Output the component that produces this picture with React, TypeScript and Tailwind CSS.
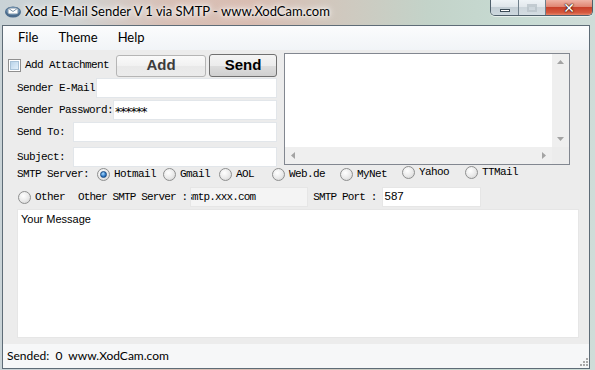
import React from "react";

const mono =
  "font-['Liberation_Mono','DejaVu_Sans_Mono',monospace] text-[11px] tracking-[-0.6px] text-black whitespace-nowrap leading-none";

function Radio({ checked }: { checked?: boolean }) {
  return (
    <span className="w-[13px] h-[13px] rounded-full border border-[#8e8f8f] bg-[radial-gradient(circle_at_40%_35%,#ffffff,#e9e9e9_55%,#cdcdcd)] flex items-center justify-center shrink-0">
      {checked && (
        <span className="w-[7px] h-[7px] rounded-full border border-[#1b4c82] bg-[radial-gradient(circle_at_40%_35%,#a9dcff,#2a74c4_60%,#174d8c)]" />
      )}
    </span>
  );
}

function Option({ label, checked, w }: { label: string; checked?: boolean; w: string }) {
  return (
    <div className={"flex items-center gap-[4px] " + w}>
      <Radio checked={checked} />
      <span className={mono}>{label}</span>
    </div>
  );
}

function Input({ w, children }: { w: string; children?: React.ReactNode }) {
  return (
    <div
      className={
        "h-[20px] bg-white border border-[#e2e6ea] flex items-center overflow-hidden " + w
      }
    >
      {children}
    </div>
  );
}

function Arrow({ dir }: { dir: "up" | "down" | "left" | "right" }) {
  const pts =
    dir === "up"
      ? "0,4 3.5,0 7,4"
      : dir === "down"
      ? "0,0 3.5,4 7,0"
      : dir === "left"
      ? "4,0 0,3.5 4,7"
      : "0,0 4,3.5 0,7";
  const vertical = dir === "up" || dir === "down";
  return (
    <svg width={vertical ? 7 : 4} height={vertical ? 4 : 7} viewBox={vertical ? "0 0 7 4" : "0 0 4 7"}>
      <polygon points={pts} fill="#a3a3a3" />
    </svg>
  );
}

export default function App() {
  return (
    <div className="w-[595px] h-[370px] overflow-hidden flex flex-col bg-[linear-gradient(90deg,#c9d3d7_0%,#cfd3d3_12%,#d8c0b6_28%,#d9bdb2_42%,#cfc9bf_58%,#c3d3c9_72%,#c7dbd3_88%,#cfdcd8_100%)]">
      {/* Title bar */}
      <div className="h-[25px] flex items-start shrink-0">
        <div className="flex items-center h-[22px] pl-[4px]">
          <svg width="18" height="14" viewBox="0 0 18 14">
            <ellipse cx="9" cy="8" rx="8" ry="5.5" fill="#4a6b8c" />
            <ellipse cx="9" cy="7" rx="6.5" ry="4" fill="#7fa3c4" />
            <path d="M4 4 L14 4 L14 10 L4 10 Z" fill="#ffffff" stroke="#5d7891" strokeWidth="0.8" />
            <path d="M4 4 L9 7.5 L14 4" fill="none" stroke="#5d7891" strokeWidth="0.8" />
          </svg>
          <span className="ml-[3px] mt-[1px] font-['Lato','Noto_Sans',sans-serif] text-[13px] text-black whitespace-nowrap [text-shadow:0_0_6px_#ffffff,0_0_10px_#ffffff,0_0_3px_#ffffff]">
            Xod E-Mail Sender V 1 via SMTP - www.XodCam.com
          </span>
        </div>
        <div className="ml-auto mr-[2px] flex h-[16px] rounded-b-[5px] overflow-hidden border border-t-0 border-[#4f5f6b] shadow-[0_1px_0_rgba(255,255,255,0.6)]">
          <div className="w-[28px] h-full bg-[linear-gradient(180deg,#eef3f6_0%,#dfe6eb_45%,#c3ced5_50%,#cdd8de_100%)] flex items-end justify-center pb-[3px] border-r border-[#6f7f8b]">
            <div className="w-[10px] h-[3px] bg-white border border-[#3b4b56]" />
          </div>
          <div className="w-[27px] h-full bg-[linear-gradient(180deg,#eef3f6_0%,#e2e8ec_45%,#cdd6dc_50%,#d4dde2_100%)] flex items-center justify-center border-r border-[#6f7f8b]">
            <div className="w-[10px] h-[8px] border-2 border-t-[3px] border-[#b9c3c9] opacity-80" />
          </div>
          <div className="w-[46px] h-full bg-[linear-gradient(180deg,#efb4a6_0%,#e08672_45%,#c8412a_50%,#d65a3f_85%,#e6886c_100%)] flex items-center justify-center">
            <span className="font-['DejaVu_Sans',sans-serif] font-bold text-[14px] leading-none text-white [text-shadow:0_0_1px_#3a1a10,0_0_2px_#3a1a10,0_0_1px_#3a1a10]">
              ✕
            </span>
          </div>
        </div>
      </div>

      {/* Client */}
      <div className="flex-1 ml-[2px] mr-[5px] mb-[1px] border border-[#5e6c77] flex flex-col bg-[#ececec] min-h-0">
        {/* Menu bar */}
        <div className="h-[24px] shrink-0 flex items-center bg-[linear-gradient(180deg,#fbfcfd,#f1f4f7)] font-['Lato','Noto_Sans',sans-serif] text-[13px] text-black">
          <span className="ml-[15px]">File</span>
          <span className="ml-[20px]">Theme</span>
          <span className="ml-[20px]">Help</span>
        </div>

        {/* Form */}
        <div className="flex-1 flex flex-col">
          <div className="h-[117px] flex">
            {/* Left column */}
            <div className="ml-[5px] w-[269px] pt-[4px] flex flex-col">
              <div className="h-[23px] flex items-center">
                <div className="w-[108px] flex items-center">
                  <span className="w-[13px] h-[13px] border border-[#8f8f8f] bg-white p-[1px] shrink-0">
                    <span className="block w-full h-full bg-[linear-gradient(135deg,#b9d4ea,#e3f0fa)] border border-[#a9c3d8]" />
                  </span>
                  <span className={mono + " ml-[4px]"}>Add Attachment</span>
                </div>
                <div className="w-[90px] h-[22px] rounded-[3px] border border-[#b5b5b5] bg-[linear-gradient(180deg,#fafafa,#f1f1f1_50%,#e9e9e9_51%,#ebebeb)] flex items-center justify-center font-['Liberation_Sans',Arial,sans-serif] font-bold text-[15px] text-[#3c3c3c]">
                  Add
                </div>
                <div className="ml-[3px] w-[68px] h-[23px] rounded-[3px] border border-[#707070] bg-[linear-gradient(180deg,#f4f4f4,#ececec_50%,#dddddd_51%,#d0d0d0)] flex items-center justify-center font-['Liberation_Sans',Arial,sans-serif] font-bold text-[15px] text-black">
                  Send
                </div>
              </div>
              <div className="mt-[1px] flex items-center justify-between">
                <span className={mono + " ml-[9px]"}>Sender E-Mail</span>
                <Input w="w-[181px]" />
              </div>
              <div className="mt-[2px] flex items-center justify-between">
                <span className={mono + " ml-[9px]"}>Sender Password:</span>
                <Input w="w-[165px]">
                  <span className="font-['DejaVu_Sans',sans-serif] text-[12.5px] leading-none tracking-[-1px] ml-[1px] mt-[4px] text-black">
                    ******
                  </span>
                </Input>
              </div>
              <div className="mt-[2px] flex items-center justify-between">
                <span className={mono + " ml-[9px]"}>Send To:</span>
                <Input w="w-[204px]" />
              </div>
              <div className="mt-[5px] flex items-center justify-between">
                <span className={mono + " ml-[9px]"}>Subject:</span>
                <Input w="w-[204px]" />
              </div>
            </div>

            {/* List box */}
            <div className="ml-[7px] mt-[3px] w-[286px] h-[112px] border border-[#828790] bg-white flex flex-col">
              <div className="flex-1 flex min-h-0">
                <div className="flex-1 bg-white" />
                <div className="w-[17px] bg-[#efefef] flex flex-col items-center justify-between py-[6px]">
                  <Arrow dir="up" />
                  <Arrow dir="down" />
                </div>
              </div>
              <div className="h-[17px] flex">
                <div className="flex-1 bg-[#efefef] flex items-center justify-between px-[6px]">
                  <Arrow dir="left" />
                  <Arrow dir="right" />
                </div>
                <div className="w-[17px] bg-[#ececec]" />
              </div>
            </div>
          </div>

          {/* SMTP row */}
          <div className="h-[14px] flex items-center pl-[14px]">
            <span className={mono + " w-[80px]"}>SMTP Server:</span>
            <Option label="Hotmail" checked w="w-[66px]" />
            <Option label="Gmail" w="w-[56px]" />
            <Option label="AOL" w="w-[53px]" />
            <Option label="Web.de" w="w-[68px]" />
            <Option label="MyNet" w="w-[62px]" />
            <div className="w-[63px] flex items-center gap-[4px] -mt-[3px]">
              <Radio />
              <span className={mono}>Yahoo</span>
            </div>
            <div className="flex items-center gap-[4px] -mt-[3px]">
              <Radio />
              <span className={mono}>TTMail</span>
            </div>
          </div>

          {/* Other row */}
          <div className="mt-[6px] h-[20px] flex items-center pl-[15px]">
            <div className="w-[60px] flex items-center gap-[4px]">
              <Radio />
              <span className={mono}>Other</span>
            </div>
            <span className={mono + " tracking-[-0.85px]"}>Other SMTP Server :</span>
            <div className="ml-[3px] w-[118px] h-[20px] bg-[#f4f4f4] border border-[#e6e6e6] flex items-center overflow-hidden">
              <span className={mono + " -ml-[5px] tracking-[-0.85px]"}>smtp.xxx.com</span>
            </div>
            <span className={mono + " ml-[5px] tracking-[-0.85px]"}>SMTP Port :</span>
            <div className="ml-[5px] w-[99px] h-[20px] bg-white border border-[#e6e6e6] flex items-center">
              <span className="ml-[2px] font-['Liberation_Sans',Arial,sans-serif] text-[11.5px] text-black">587</span>
            </div>
          </div>

          {/* Message */}
          <div className="mt-[2px] ml-[14px] w-[562px] h-[129px] bg-white border border-[#e6e6e6] pl-[3px] pt-[4px]">
            <span className="block leading-none font-['Liberation_Sans',Arial,sans-serif] text-[11px] text-black">Your Message</span>
          </div>
        </div>

        {/* Status bar */}
        <div className="h-[24px] shrink-0 bg-[#f6f7f8] flex items-center relative font-['Lato','Noto_Sans',sans-serif] text-[12px] text-black whitespace-pre">
          <span className="ml-[4px]">Sended:  0  www.XodCam.com</span>
          <svg className="absolute right-[0px] bottom-[1px]" width="10" height="10" viewBox="0 0 10 10">
            <rect x="7" y="1" width="2" height="2" fill="#a9a9a9" />
            <rect x="4" y="4" width="2" height="2" fill="#a9a9a9" />
            <rect x="7" y="4" width="2" height="2" fill="#a9a9a9" />
            <rect x="1" y="7" width="2" height="2" fill="#a9a9a9" />
            <rect x="4" y="7" width="2" height="2" fill="#a9a9a9" />
            <rect x="7" y="7" width="2" height="2" fill="#a9a9a9" />
          </svg>
        </div>
      </div>
    </div>
  );
}
